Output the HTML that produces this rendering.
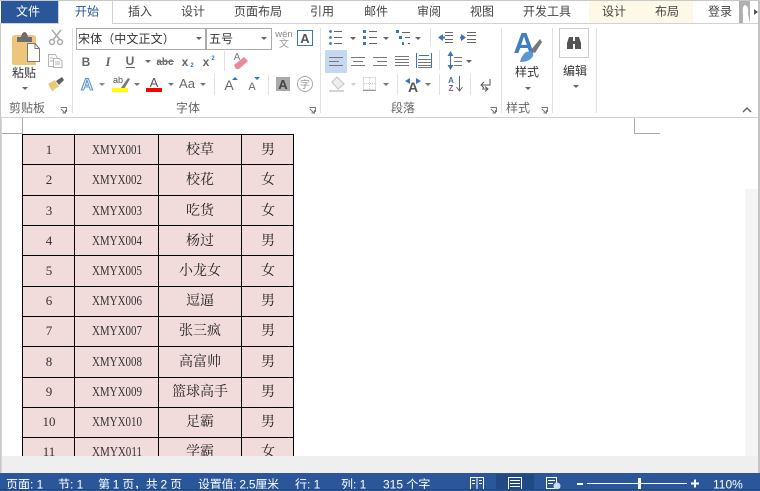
<!DOCTYPE html>
<html><head><meta charset="utf-8"><style>
html,body{margin:0;padding:0;background:#fff;width:760px;height:491px;overflow:hidden}
svg{position:absolute;left:0;top:0;display:block}
text{font-family:"Liberation Sans","Noto Sans CJK SC",sans-serif;font-size:12px;fill:#444}
.m{text-anchor:middle}
.t{fill:#444;font-size:12px;text-anchor:middle}
.c{font-family:"Liberation Serif","Noto Serif CJK SC",serif;font-size:14px;fill:#222;text-anchor:middle}
.x{font-family:"Liberation Serif","Noto Serif CJK SC",serif;font-size:13.5px;fill:#333;text-anchor:middle}
.n{font-family:"Liberation Serif",serif;font-size:13px;fill:#333;text-anchor:middle}
.s{fill:#fff;font-size:12px}
.g{fill:#666;font-size:12px;text-anchor:middle}
</style></head><body>
<svg width="760" height="491" viewBox="0 0 760 491" xmlns="http://www.w3.org/2000/svg">
<rect width="760" height="491" fill="#fff"/>
<rect x="589" y="1" width="104" height="22" fill="#fef8e7"/>
<rect x="1" y="1" width="57" height="23" fill="#2b579a"/>
<rect x="0" y="0" width="760" height="1" fill="#c8c8c8"/>
<rect x="0" y="23" width="760" height="1" fill="#d2d2d2"/>
<path d="M58.500 1V23.500M112.500 1V23.500" stroke="#d2d2d2" fill="none"/>
<rect x="59" y="22" width="53" height="3" fill="#fff"/>
<text x="28" y="15.500" class="m" style="fill:#fff">文件</text>
<text x="87" y="15.500" class="m" style="fill:#2b579a">开始</text>
<text x="140" y="15.500" class="t">插入</text>
<text x="193" y="15.500" class="t">设计</text>
<text x="258" y="15.500" class="t">页面布局</text>
<text x="322" y="15.500" class="t">引用</text>
<text x="376" y="15.500" class="t">邮件</text>
<text x="429" y="15.500" class="t">审阅</text>
<text x="482" y="15.500" class="t">视图</text>
<text x="547" y="15.500" class="t">开发工具</text>
<text x="614" y="15.500" class="t">设计</text>
<text x="667" y="15.500" class="t">布局</text>
<text x="720" y="15.500" class="t">登录</text>
<rect x="739" y="1" width="11" height="22" fill="#b0b0b0"/>
<path d="M743 23V14Q742 6 745 5Q749 6 748 14L750 23Z" fill="#fff"/>
<path d="M754 9L758 12L754 15Z" fill="#555"/>

<!-- ribbon bottom and separators -->
<rect x="0" y="117" width="760" height="1" fill="#d2d2d2"/>
<g stroke="#e1e1e1">
<path d="M72.500 28V113M224.500 51V71M214.500 74V95M268.500 75V95M320.500 28V113M430.500 28V46M439.500 50V70M397.500 74V95M439.500 74V95M470.500 74V95M501.500 28V113M552.500 28V113M596.500 28V113"/>
</g>

<!-- clipboard -->
<path d="M12 38Q12 35 15 35H33Q36 35 36 38V65H14Q12 65 12 63Z" fill="#edc67c"/>
<path d="M17 37H21Q22 32 24.500 32Q27 32 28 37H32V42H17Z" fill="#6d6d6d"/>
<path d="M27.500 43.500H35L39.500 48.500V61.500H27.500Z" fill="#fff" stroke="#7a7a7a"/>
<path d="M35 43.500V48.500H39.500" fill="none" stroke="#7a7a7a"/>
<text x="24" y="77" class="m" style="font-size:12px;fill:#333">粘贴</text>
<path d="M22 87H28L25 90Z" fill="#666"/>
<!-- scissors -->
<g fill="none" stroke="#a9a9a9" stroke-width="1.500">
<path d="M52 30L60 40M61 30L53 40"/><circle cx="52" cy="42" r="2.500"/><circle cx="60" cy="42" r="2.500"/>
</g>
<!-- copy -->
<g fill="#fff" stroke="#b4b4b4"><path d="M48.500 54.500H55L57 57V66.500H48.500Z"/><path d="M53.500 58.500H59L62 61V67.500H53.500Z"/><path d="M50 58H53M50 61H53M55 62H60M55 64H60" fill="none"/></g>
<!-- format brush -->
<path d="M48 84L55 80L59 87Q54 88 53 92Q50 88 48 84Z" fill="#edc67c"/>
<path d="M56 81L62 77L64 80L59 85Z" fill="#5f5f5f"/>
<text x="27" y="112" class="g">剪贴板</text>
<path d="M60.500 107.500H66.500V112M61 109L65 113M62.500 113H65.500V110" fill="none" stroke="#777"/>

<!-- font comboboxes -->
<rect x="76.500" y="28.500" width="129" height="21" fill="#fff" stroke="#ababab"/>
<rect x="206.500" y="28.500" width="65" height="21" fill="#fff" stroke="#ababab"/>
<text x="78" y="43" style="font-size:12px;fill:#333;letter-spacing:.1px">宋体（中文正文）</text>
<text x="209" y="43" style="font-size:12px;fill:#333">五号</text>
<path d="M196 37H202L199 40Z" fill="#666"/>
<path d="M261 37H267L264 40Z" fill="#666"/>
<text x="284" y="37" class="m" style="font-size:9.500px;fill:#888">wén</text>
<text x="284" y="47" class="m" style="font-size:10px;fill:#999">文</text>
<rect x="297.500" y="30.500" width="15" height="15" fill="#fff" stroke="#3e78b0"/>
<text x="305" y="43" class="m" style="font-size:13px;fill:#555;font-weight:bold">A</text>

<!-- row 2 -->
<text x="86" y="66" class="m" style="font-weight:bold;fill:#666;font-size:12px">B</text>
<text x="108" y="66" class="m" style="font-style:italic;font-family:'Liberation Serif',serif;fill:#666;font-size:13px;font-weight:bold">I</text>
<text x="130" y="65" class="m" style="font-weight:bold;fill:#666;font-size:12px">U</text>
<rect x="126" y="67" width="9" height="1" fill="#666"/>
<path d="M145 60H151L148 63Z" fill="#666"/>
<text x="165" y="65" class="m" style="font-size:10px;fill:#666;font-weight:bold">abc</text>
<rect x="157" y="61" width="17" height="1" fill="#777"/>
<text x="185" y="66" class="m" style="font-weight:bold;fill:#666;font-size:12px">x</text>
<text x="192" y="67" class="m" style="font-size:6px;fill:#2b78c0;font-weight:bold">2</text>
<text x="206" y="66" class="m" style="font-weight:bold;fill:#666;font-size:12px">x</text>
<text x="213" y="60" class="m" style="font-size:6px;fill:#2b78c0;font-weight:bold">2</text>
<text x="237" y="60" class="m" style="font-size:10px;fill:#777">A</text>
<path d="M234 65L244 57L248 61L239 69L236 69Z" fill="#ea8a96"/>

<!-- row 3 -->
<text x="87" y="90" class="m" style="font-size:17px;font-weight:bold;fill:#e8f1fa;stroke:#5b93cf;stroke-width:1">A</text>
<path d="M99 83H105L102 86Z" fill="#888"/>
<text x="118" y="83" class="m" style="font-size:9px;fill:#555">ab</text>
<path d="M121 88L128 78L130 79L124 89Z" fill="#777"/>
<rect x="112" y="88" width="16" height="4" fill="#ff0"/>
<path d="M134 83H140L137 86Z" fill="#777"/>
<text x="154" y="87" class="m" style="font-size:13px;fill:#555">A</text>
<rect x="146" y="88" width="16" height="4" fill="#f00"/>
<path d="M168 83H174L171 86Z" fill="#777"/>
<text x="187" y="88" class="m" style="font-size:13px;fill:#666">Aa</text>
<path d="M200 83H206L203 86Z" fill="#777"/>
<text x="229" y="90" class="m" style="font-size:14px;fill:#666">A</text>
<path d="M232 80H238L235 77Z" fill="#2b78c0"/>
<text x="252" y="90" class="m" style="font-size:11px;fill:#666">A</text>
<path d="M254 77H260L257 80Z" fill="#2b78c0"/>
<rect x="276" y="77" width="14" height="14" fill="#aaa"/>
<text x="283" y="89" class="m" style="font-size:13px;font-weight:bold;fill:#444">A</text>
<circle cx="305" cy="84" r="7.500" fill="#fff" stroke="#aaa"/>
<text x="305" y="88" class="m" style="font-size:10px;fill:#999">字</text>
<text x="188" y="112" class="g">字体</text>
<path d="M309.500 107.500H315.500V112M310 109L314 113M311.500 113H314.500V110" fill="none" stroke="#777"/>

<!-- paragraph row 1 -->
<g stroke="#666" fill="none">
<path d="M334 31.500H342M334 37.500H342M334 43.500H342"/>
<path d="M369 31.500H377M369 37.500H377M369 43.500H377"/>
<path d="M402 32.500H410M405 37.500H410M408 43.500H410"/>
<path d="M445 32.500H453M445 35.500H453M445 39.500H453M445 42.500H453"/>
<path d="M467 32.500H476M467 35.500H476M467 39.500H476M467 42.500H476"/>
</g>
<g fill="#3d75b5">
<circle cx="330.500" cy="31.500" r="1.400"/><circle cx="330.500" cy="37.500" r="1.400"/><circle cx="330.500" cy="43.500" r="1.400"/>
<rect x="363" y="30" width="3" height="3"/><rect x="363" y="36" width="3" height="3"/><rect x="363" y="42" width="3" height="3"/>
<rect x="396" y="30" width="3" height="3"/><rect x="399" y="36" width="3" height="3"/><rect x="402" y="42" width="2" height="3"/>
<path d="M438 37.500L443 34V41Z"/><rect x="442" y="36.500" width="3" height="2"/>
<path d="M466 37.500L461 34V41Z"/><rect x="460" y="36.500" width="3" height="2"/>
</g>
<g fill="#666"><path d="M350 37H356L353 40ZM383 37H389L386 40ZM415 37H421L418 40Z"/></g>

<!-- paragraph row 2 -->
<rect x="325" y="50" width="22" height="23" fill="#c5d9f3"/>
<g stroke="#777" fill="none">
<path d="M329 57.500H343M329 61.500H339M329 65.500H343"/>
<path d="M351 57.500H365M353 61.500H363M351 65.500H365"/>
<path d="M373 57.500H387M377 61.500H387M373 65.500H387"/>
<path d="M395 56.500H409M395 59.500H409M395 62.500H409M395 65.500H409"/>
<path d="M418 59.500H431M418 62.500H431M418 65.500H431M418 67.500H431"/>
<path d="M416.500 53V68M431.500 53V68" stroke="#3d75b5"/>
<path d="M419 55.500H429" stroke="#3d75b5"/>
<path d="M454 57.500H462M454 61.500H462M454 65.500H462"/>
<path d="M450.500 54V67" stroke="#3d75b5"/>
</g>
<path d="M450.500 51L453.500 56H447.500ZM450.500 70L453.500 65H447.500Z" fill="#3d75b5"/>
<path d="M466 60H472L469 63Z" fill="#666"/>

<!-- paragraph row 3 -->
<path d="M329 90H344V92H329Z" fill="#d4d4d4"/>
<path d="M332 82L337 77L344 84L338 89Z" fill="#eee" stroke="#c4c4c4"/>
<path d="M351 83H356L353.500 86Z" fill="#ccc"/>
<rect x="363.500" y="77.500" width="12" height="12" fill="none" stroke="#bbb" stroke-dasharray="1 1"/>
<path d="M369.500 78V90M364 83.500H376" stroke="#ccc" stroke-dasharray="1 1"/>
<path d="M363 90.500H376" stroke="#999"/>
<path d="M383 83H389L386 86Z" fill="#777"/>
<text x="413" y="92" class="m" style="font-size:14px;font-weight:bold;fill:#555">A</text>
<path d="M405 81L410 78V84ZM421 81L416 78V84Z" fill="#3d75b5"/>
<path d="M425 83H431L428 86Z" fill="#777"/>
<text x="451" y="83" class="m" style="font-size:8px;fill:#3d75b5;font-weight:bold">A</text>
<text x="451" y="91" class="m" style="font-size:8px;fill:#8b55b0;font-weight:bold">Z</text>
<path d="M459.500 76V90M456.500 87L459.500 91L462.500 87" fill="none" stroke="#666"/>
<path d="M490 79V85H482M484 82L481 85L484 88" fill="none" stroke="#555"/>
<path d="M482 89H488M485 86.500L488 89L485 91.500" fill="none" stroke="#555"/>
<text x="403" y="112" class="g">段落</text>
<path d="M490.500 107.500H496.500V112M491 109L495 113M492.500 113H495.500V110" fill="none" stroke="#777"/>

<!-- styles -->
<text x="524" y="53" class="m" style="font-size:29px;font-weight:bold;fill:#3f7fc0">A</text>
<path d="M526 52Q521 56 520 62Q530 62 533 56Q534 53 531 51Z" fill="#5d97d2"/>
<path d="M531 50L540 39L542 42L535 53Z" fill="#777"/>
<text x="527" y="76" class="m" style="font-size:12px;fill:#333">样式</text>
<path d="M525 87H531L528 90Z" fill="#666"/>
<text x="518" y="112" class="g">样式</text>
<path d="M541.500 107.500H547.500V112M542 109L546 113M543.500 113H546.500V110" fill="none" stroke="#777"/>

<!-- editing -->
<rect x="559.500" y="28.500" width="29" height="29" fill="#fff" stroke="#ccc"/>
<path d="M567 49V43L569 37H573V49ZM575 37H579L581 43V49H575ZM573 41H575V44H573Z" fill="#555"/>
<text x="575" y="75" class="m" style="font-size:12px;fill:#333">编辑</text>
<path d="M573 85H579L576 88Z" fill="#666"/>
<path d="M743 112L747 108L751 112" fill="none" stroke="#666" stroke-width="1.500"/>

<!-- document -->
<path d="M22.500 118V133.500H2M634.500 118V133.500H660" fill="none" stroke="#aaa"/>
<rect x="22.500" y="134.500" width="271" height="322" fill="#f2dcdb"/>
<g stroke="#000" fill="none">
<path d="M22.500 134V456M74.500 134V456M158.500 134V456M241.500 134V456M293.500 134V456"/>
<path d="M22 134.500H294M22 164.500H294M22 195.500H294M22 225.500H294M22 255.500H294M22 286.500H294M22 316.500H294M22 346.500H294M22 377.500H294M22 407.500H294M22 437.500H294"/>
</g>
<text class="n" x="49" y="154">1</text><text class="x" x="117" y="154" textLength="50" lengthAdjust="spacingAndGlyphs">XMYX001</text><text class="c" x="200" y="154">校草</text><text class="c" x="268" y="154">男</text>
<text class="n" x="49" y="184">2</text><text class="x" x="117" y="184" textLength="50" lengthAdjust="spacingAndGlyphs">XMYX002</text><text class="c" x="200" y="184">校花</text><text class="c" x="268" y="184">女</text>
<text class="n" x="49" y="215">3</text><text class="x" x="117" y="215" textLength="50" lengthAdjust="spacingAndGlyphs">XMYX003</text><text class="c" x="200" y="215">吃货</text><text class="c" x="268" y="215">女</text>
<text class="n" x="49" y="245">4</text><text class="x" x="117" y="245" textLength="50" lengthAdjust="spacingAndGlyphs">XMYX004</text><text class="c" x="200" y="245">杨过</text><text class="c" x="268" y="245">男</text>
<text class="n" x="49" y="275">5</text><text class="x" x="117" y="275" textLength="50" lengthAdjust="spacingAndGlyphs">XMYX005</text><text class="c" x="200" y="275">小龙女</text><text class="c" x="268" y="275">女</text>
<text class="n" x="49" y="305">6</text><text class="x" x="117" y="305" textLength="50" lengthAdjust="spacingAndGlyphs">XMYX006</text><text class="c" x="200" y="305">逗逼</text><text class="c" x="268" y="305">男</text>
<text class="n" x="49" y="335">7</text><text class="x" x="117" y="335" textLength="50" lengthAdjust="spacingAndGlyphs">XMYX007</text><text class="c" x="200" y="335">张三疯</text><text class="c" x="268" y="335">男</text>
<text class="n" x="49" y="366">8</text><text class="x" x="117" y="366" textLength="50" lengthAdjust="spacingAndGlyphs">XMYX008</text><text class="c" x="200" y="366">高富帅</text><text class="c" x="268" y="366">男</text>
<text class="n" x="49" y="396">9</text><text class="x" x="117" y="396" textLength="50" lengthAdjust="spacingAndGlyphs">XMYX009</text><text class="c" x="200" y="396">篮球高手</text><text class="c" x="268" y="396">男</text>
<text class="n" x="49" y="426">10</text><text class="x" x="117" y="426" textLength="50" lengthAdjust="spacingAndGlyphs">XMYX010</text><text class="c" x="200" y="426">足霸</text><text class="c" x="268" y="426">男</text>
<text class="n" x="49" y="456">11</text><text class="x" x="117" y="456" textLength="50" lengthAdjust="spacingAndGlyphs">XMYX011</text><text class="c" x="200" y="456">学霸</text><text class="c" x="268" y="456">女</text>

<!-- scrollbar and bottom -->
<rect x="745" y="189" width="13" height="267" fill="#f5f5f5"/>
<rect x="0" y="456" width="760" height="17" fill="#efefef"/>
<rect x="0" y="24" width="1" height="449" fill="#c8c8c8"/>
<rect x="1" y="118" width="1" height="355" fill="#d8d8d8"/>
<rect x="758" y="1" width="2" height="472" fill="#c4c4c4"/>

<!-- status bar -->
<rect x="0" y="473" width="760" height="18" fill="#2b579a"/>
<rect x="496" y="474" width="38" height="17" fill="#214a85"/>
<text class="s" x="6" y="488.500">页面: 1</text>
<text class="s" x="58" y="488.500">节: 1</text>
<text class="s" x="98" y="488.500" textLength="84">第 1 页，共 2 页</text>
<text class="s" x="198" y="488.500" textLength="81">设置值: 2.5厘米</text>
<text class="s" x="295" y="488.500">行: 1</text>
<text class="s" x="341" y="488.500">列: 1</text>
<text class="s" x="383" y="488.500">315 个字</text>
<text class="s" x="713" y="488.500">110%</text>
<g fill="none" stroke="#fff">
<path d="M470.500 477.500H483.500V489.500H470.500ZM477 477V490M472 480.500H475M472 483.500H475M479 480.500H482M479 483.500H482"/>
<path d="M508.500 477.500H521.500V490H508.500ZM510 480.500H520M510 483.500H520M510 486.500H520"/>
<path d="M546.500 477.500H556.500V488.500H546.500ZM548 480.500H555M548 483.500H553"/>
</g>
<circle cx="557" cy="486" r="3.500" fill="#cfdced"/>
<rect x="577" y="483" width="6" height="2" fill="#fff"/>
<rect x="587" y="483" width="100" height="1" fill="#fff"/>
<rect x="638" y="478" width="3" height="11" fill="#fff"/>
<path d="M691 483.500H699M695 479.500V487.500" stroke="#fff" stroke-width="2"/>
<rect x="0" y="489" width="760" height="1" fill="#1f4a80"/>
<rect x="0" y="490" width="760" height="1" fill="#2b579a"/>
</svg>
</body></html>
